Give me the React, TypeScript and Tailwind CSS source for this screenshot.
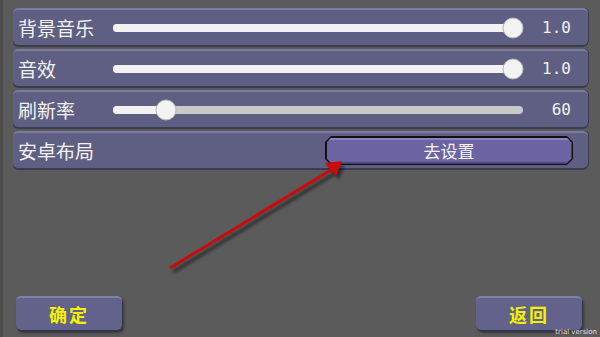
import React from 'react'

interface SliderRowProps {
  label: string
  value: string
  percent: number
}

function SliderRow({ label, value, percent }: SliderRowProps) {
  return (
    <div className="h-[37px] flex items-center rounded-[5px] bg-[#5f5f83] border-t-2 border-[#7c7ca3] shadow-[0_2px_0_#3b3b52,1px_0_0_#3b3b52]">
      <span className="w-[100px] pl-[5px] text-[19px] leading-none text-[#f2f2f2] font-['Noto_Sans_CJK_SC',sans-serif]">
        {label}
      </span>
      <div className="relative w-[410px] h-[8px] rounded-full bg-[#c9c9c9]">
        <div className="absolute left-0 top-0 h-full rounded-full bg-[#f2f2f2]" style={{ width: `${percent}%` }} />
        <div
          className="absolute top-1/2 w-[21px] h-[21px] -translate-x-1/2 -translate-y-1/2 rounded-full bg-[#f3f3f3] border border-[#b8b8b8]"
          style={{ left: `${percent}%` }}
        />
      </div>
      <span className="flex-1 pr-[17px] text-right text-[16px] leading-none text-[#f2f2f2] font-['DejaVu_Sans_Mono',monospace]">
        {value}
      </span>
    </div>
  )
}

function BottomButton({ label }: { label: string }) {
  return (
    <button className="w-[106px] h-[34px] rounded-[5px] bg-[#62628a] border-t-2 border-[#8080a8] shadow-[1px_2px_0_#35354a,2px_3px_3px_rgba(0,0,0,0.35)] text-[18px] font-bold text-[#f4f000] tracking-[2px] font-['Noto_Sans_CJK_SC',sans-serif]">
      {label}
    </button>
  )
}

export default function App() {
  return (
    <div className="relative w-[600px] h-[337px] overflow-hidden bg-[#5b5b5b] border-l-[3px] border-[#4d4d4d] flex flex-col">
      {/* Settings rows */}
      <div className="pl-[10px] pr-[12px] pt-[8px] flex flex-col gap-[4px]">
        <SliderRow label="背景音乐" value="1.0" percent={97.6} />
        <SliderRow label="音效" value="1.0" percent={97.6} />
        <SliderRow label="刷新率" value="60" percent={13} />
        <div className="h-[37px] flex items-center rounded-[5px] bg-[#5f5f83] border-t-2 border-[#7c7ca3] shadow-[0_2px_0_#3b3b52,1px_0_0_#3b3b52]">
          <span className="w-[312px] pl-[5px] text-[19px] leading-none text-[#f2f2f2] font-['Noto_Sans_CJK_SC',sans-serif]">
            安卓布局
          </span>
          <div className="w-[248px] h-[29px] bg-[#111] p-[1.5px] [clip-path:polygon(6px_0,calc(100%-6px)_0,100%_6px,100%_calc(100%-6px),calc(100%-6px)_100%,6px_100%,0_calc(100%-6px),0_6px)]">
            <div className="w-full h-full flex items-center justify-center bg-[#6a65a2] border-t-2 border-[#8884bd] border-b-2 border-b-[#4d4880] text-[17px] leading-none text-[#f4f4f4] font-['Noto_Sans_CJK_SC',sans-serif] [clip-path:polygon(5px_0,calc(100%-5px)_0,100%_5px,100%_calc(100%-5px),calc(100%-5px)_100%,5px_100%,0_calc(100%-5px),0_5px)]">
              去设置
            </div>
          </div>
        </div>
      </div>

      <div className="flex-1" />

      {/* Bottom buttons */}
      <div className="flex justify-between pl-[13px] pr-[18px] pb-[7px]">
        <BottomButton label="确定" />
        <BottomButton label="返回" />
      </div>

      {/* Arrow annotation */}
      <svg className="absolute left-0 top-0 pointer-events-none" width="600" height="337" viewBox="0 0 600 337">
        <defs>
          <filter id="sh" x="-20%" y="-20%" width="140%" height="140%">
            <feGaussianBlur stdDeviation="1.5" />
          </filter>
        </defs>
        <g opacity="0.45" filter="url(#sh)" transform="translate(3,4)">
          <line x1="167" y1="268" x2="328" y2="170" stroke="#000" strokeWidth="3.5" />
          <polygon points="339,161 322,163 333,176" fill="#000" />
        </g>
        <line x1="167" y1="268" x2="328" y2="170" stroke="#cc0a0a" strokeWidth="3" />
        <polygon points="339,161 322,163 333,176" fill="#cc0a0a" />
      </svg>

      <span className="absolute right-[3px] bottom-[1px] text-[7px] leading-none text-[#e0e0e0] font-['DejaVu_Sans',sans-serif]">
        trial version
      </span>
    </div>
  )
}
